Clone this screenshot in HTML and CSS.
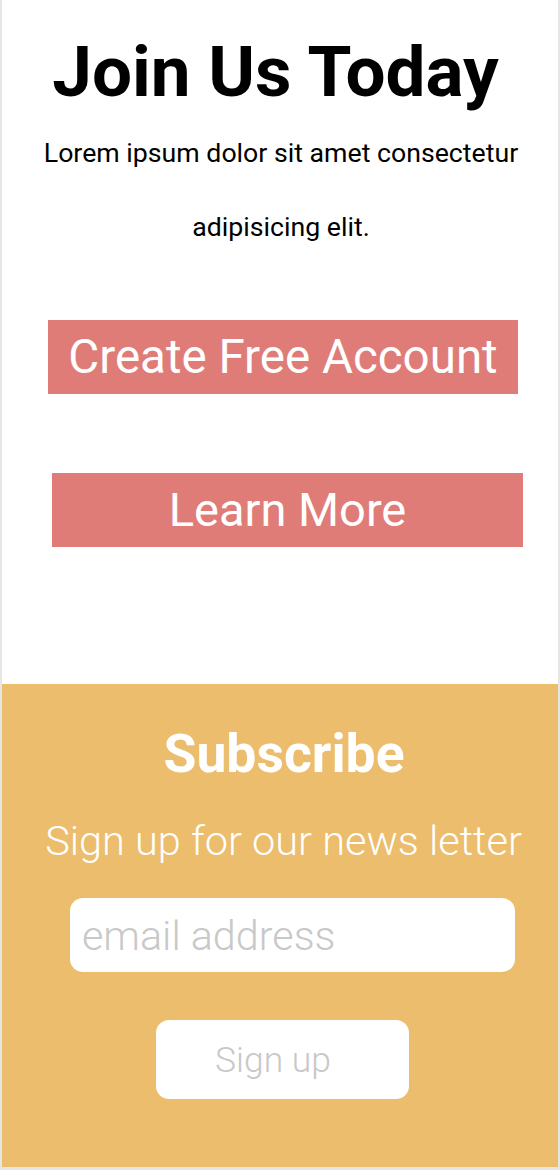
FILE: index.html
```html
<!DOCTYPE html>
<html lang="en">
<head>
<meta charset="utf-8">
<title>Join Us Today</title>
<link rel="stylesheet" href="styles.css">
</head>
<body>
<div class="page">
  <section class="hero">
    <h1 class="hero-title">Join Us Today</h1>
    <p class="hero-text">Lorem ipsum dolor sit amet consectetur adipisicing elit.</p>
    <a class="btn btn-primary" href="#">Create Free Account</a>
    <a class="btn btn-secondary" href="#">Learn More</a>
  </section>
  <section class="subscribe">
    <h2 class="subscribe-title">Subscribe</h2>
    <p class="subscribe-text">Sign up for our news letter</p>
    <input class="email" type="email" placeholder="email address">
    <button class="signup" type="button">Sign up</button>
  </section>
</div>
</body>
</html>
```
FILE: styles.css
```css
* { box-sizing: border-box; }
html, body {
  margin: 0;
  padding: 0;
  background: #e6e6e6;
  font-family: Roboto, "Liberation Sans", sans-serif;
}
.page {
  width: 556px;
  margin-left: 2px;
  background: #ffffff;
  height: 1167px;
  display: flex;
  flex-direction: column;
}
.hero {
  height: 684px;
  padding-top: 27px;
  display: flex;
  flex-direction: column;
  align-items: flex-start;
}
.hero-title {
  margin: 0;
  width: 100%;
  padding-right: 9px;
  text-align: center;
  font-size: 71px;
  line-height: 89px;
  font-weight: 700;
  color: #000;
}
.hero-text {
  margin: 0;
  width: 100%;
  padding: 0 32px 0 34px;
  text-align: center;
  font-size: 26.7px;
  line-height: 74px;
  color: #000;
}
.btn {
  display: block;
  height: 74px;
  line-height: 74px;
  background: #e07c78;
  color: #ffffff;
  font-weight: 400;
  text-align: center;
  text-decoration: none;
}
.btn-primary {
  width: 470px;
  margin: 56px 0 0 46px;
  font-size: 47.5px;
}
.btn-secondary {
  width: 471px;
  margin: 79px 0 0 50px;
  font-size: 47px;
}
.subscribe {
  flex: 1;
  background: #ebbd6c;
  padding-top: 38px;
  display: flex;
  flex-direction: column;
  align-items: center;
}
.subscribe-title {
  margin: 0 0 0 8px;
  font-size: 53.5px;
  line-height: 64px;
  font-weight: 700;
  color: #ffffff;
}
.subscribe-text {
  margin: 30px 0 0 7px;
  font-size: 41.5px;
  line-height: 50px;
  font-weight: 300;
  color: #ffffff;
}
.email {
  margin: 32px 0 0 25px;
  width: 445px;
  height: 74px;
  border: none;
  border-radius: 13px;
  background: #ffffff;
  padding: 2px 12px 0;
  font-family: Roboto, "Liberation Sans", sans-serif;
  font-size: 41.3px;
  font-weight: 300;
  color: #333;
  outline: none;
}
.email::placeholder {
  color: #c8c8c8;
}
.signup {
  margin: 48px 0 0 4px;
  width: 253px;
  height: 79px;
  border: none;
  border-radius: 13px;
  background: #ffffff;
  font-family: Roboto, "Liberation Sans", sans-serif;
  font-size: 35.5px;
  font-weight: 300;
  color: #c8c8c8;
  padding: 0 18px 0 0;
}
```
